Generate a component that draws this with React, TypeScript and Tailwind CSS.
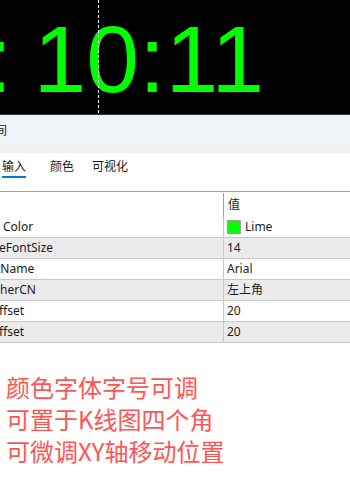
const rows = [
  { name: "Color", nameCls: "ml-[3px]", value: "Lime", swatch: true, shade: false },
  { name: "eFontSize", nameCls: "-ml-[1px]", value: "14", shade: true },
  { name: "tName", nameCls: "-ml-[4px]", value: "Arial", shade: false },
  { name: "herCN", nameCls: "ml-0", value: "左上角", shade: true },
  { name: "ffset", nameCls: "-ml-[1px]", value: "20", shade: false },
  { name: "ffset", nameCls: "-ml-[1px]", value: "20", shade: true },
];

export default function App() {
  return (
    <div className="w-[350px] h-[490px] overflow-hidden bg-white text-[#1b1b1b] font-['Noto_Sans','Noto_Sans_CJK_SC',sans-serif]">
      {/* chart strip */}
      <div className="relative h-[115px] overflow-hidden border-b border-[#3c3c3c] bg-black">
        <div className="flex whitespace-nowrap pt-[12px] font-['Liberation_Sans',Arial,sans-serif] text-[95px] leading-[95px] text-[#00ff00]">
          <span className="-ml-[14px]">:</span>
          <span className="ml-[21px]">10:11</span>
        </div>
        <div className="absolute left-[98px] top-0 bottom-0 w-px bg-[repeating-linear-gradient(to_bottom,#ffffff_0_3px,transparent_3px_5px)]" />
      </div>

      {/* title bar */}
      <div className="h-[30px] bg-[#eef3f8] pt-[7px] text-[12px] leading-[16px] font-['Noto_Sans_CJK_SC',sans-serif] whitespace-nowrap">
        <span className="-ml-[5px]">间</span>
      </div>
      <div className="h-[8px] bg-[#f0f0f0]" />

      {/* tabs */}
      <div className="flex h-[39px] items-start border-b border-[#a0a0a0] pt-[5px] text-[12px] leading-[16px] font-['Noto_Sans_CJK_SC',sans-serif]">
        <div className="ml-[2px] flex flex-col">
          <span>输入</span>
          <span className="mt-[2px] h-[2px] w-[24px] bg-[#0078d7]" />
        </div>
        <span className="ml-[24px]">颜色</span>
        <span className="ml-[18px]">可视化</span>
      </div>

      {/* property grid */}
      <div className="text-[12px]">
        <div className="flex h-[25px]">
          <div className="w-[223px]" />
          <div className="w-px bg-[#a0a0a0] mt-[1px]" />
          <div className="pl-[4px] pt-[4px] leading-[16px] font-['Noto_Sans_CJK_SC',sans-serif]">值</div>
        </div>
        {rows.map((r, i) => (
          <div
            key={i}
            className={`flex h-[21px] border-b border-[#c8c8c8] ${r.shade ? "bg-[#ebebeb]" : "bg-white"}`}
          >
            <div className="w-[223px] overflow-hidden whitespace-nowrap leading-[20px]">
              <span className={`inline-block ${r.nameCls}`}>{r.name}</span>
            </div>
            <div className="w-px bg-[#c8c8c8]" />
            <div className="flex items-center pl-[3px] leading-[20px] font-['Noto_Sans','Noto_Sans_CJK_SC',sans-serif]">
              {r.swatch && (
                <span className="mr-[4px] h-[14px] w-[14px] border border-[#a0a0a0] bg-[#00ff00]" />
              )}
              <span>{r.value}</span>
            </div>
          </div>
        ))}
      </div>

      {/* notes */}
      <div className="mt-[28px] pl-[6px] text-[24px] leading-[32px] text-[#ff5555] font-['Noto_Sans_CJK_SC',sans-serif]">
        <div>颜色字体字号可调</div>
        <div>可置于K线图四个角</div>
        <div>可微调XY轴移动位置</div>
      </div>
    </div>
  );
}
